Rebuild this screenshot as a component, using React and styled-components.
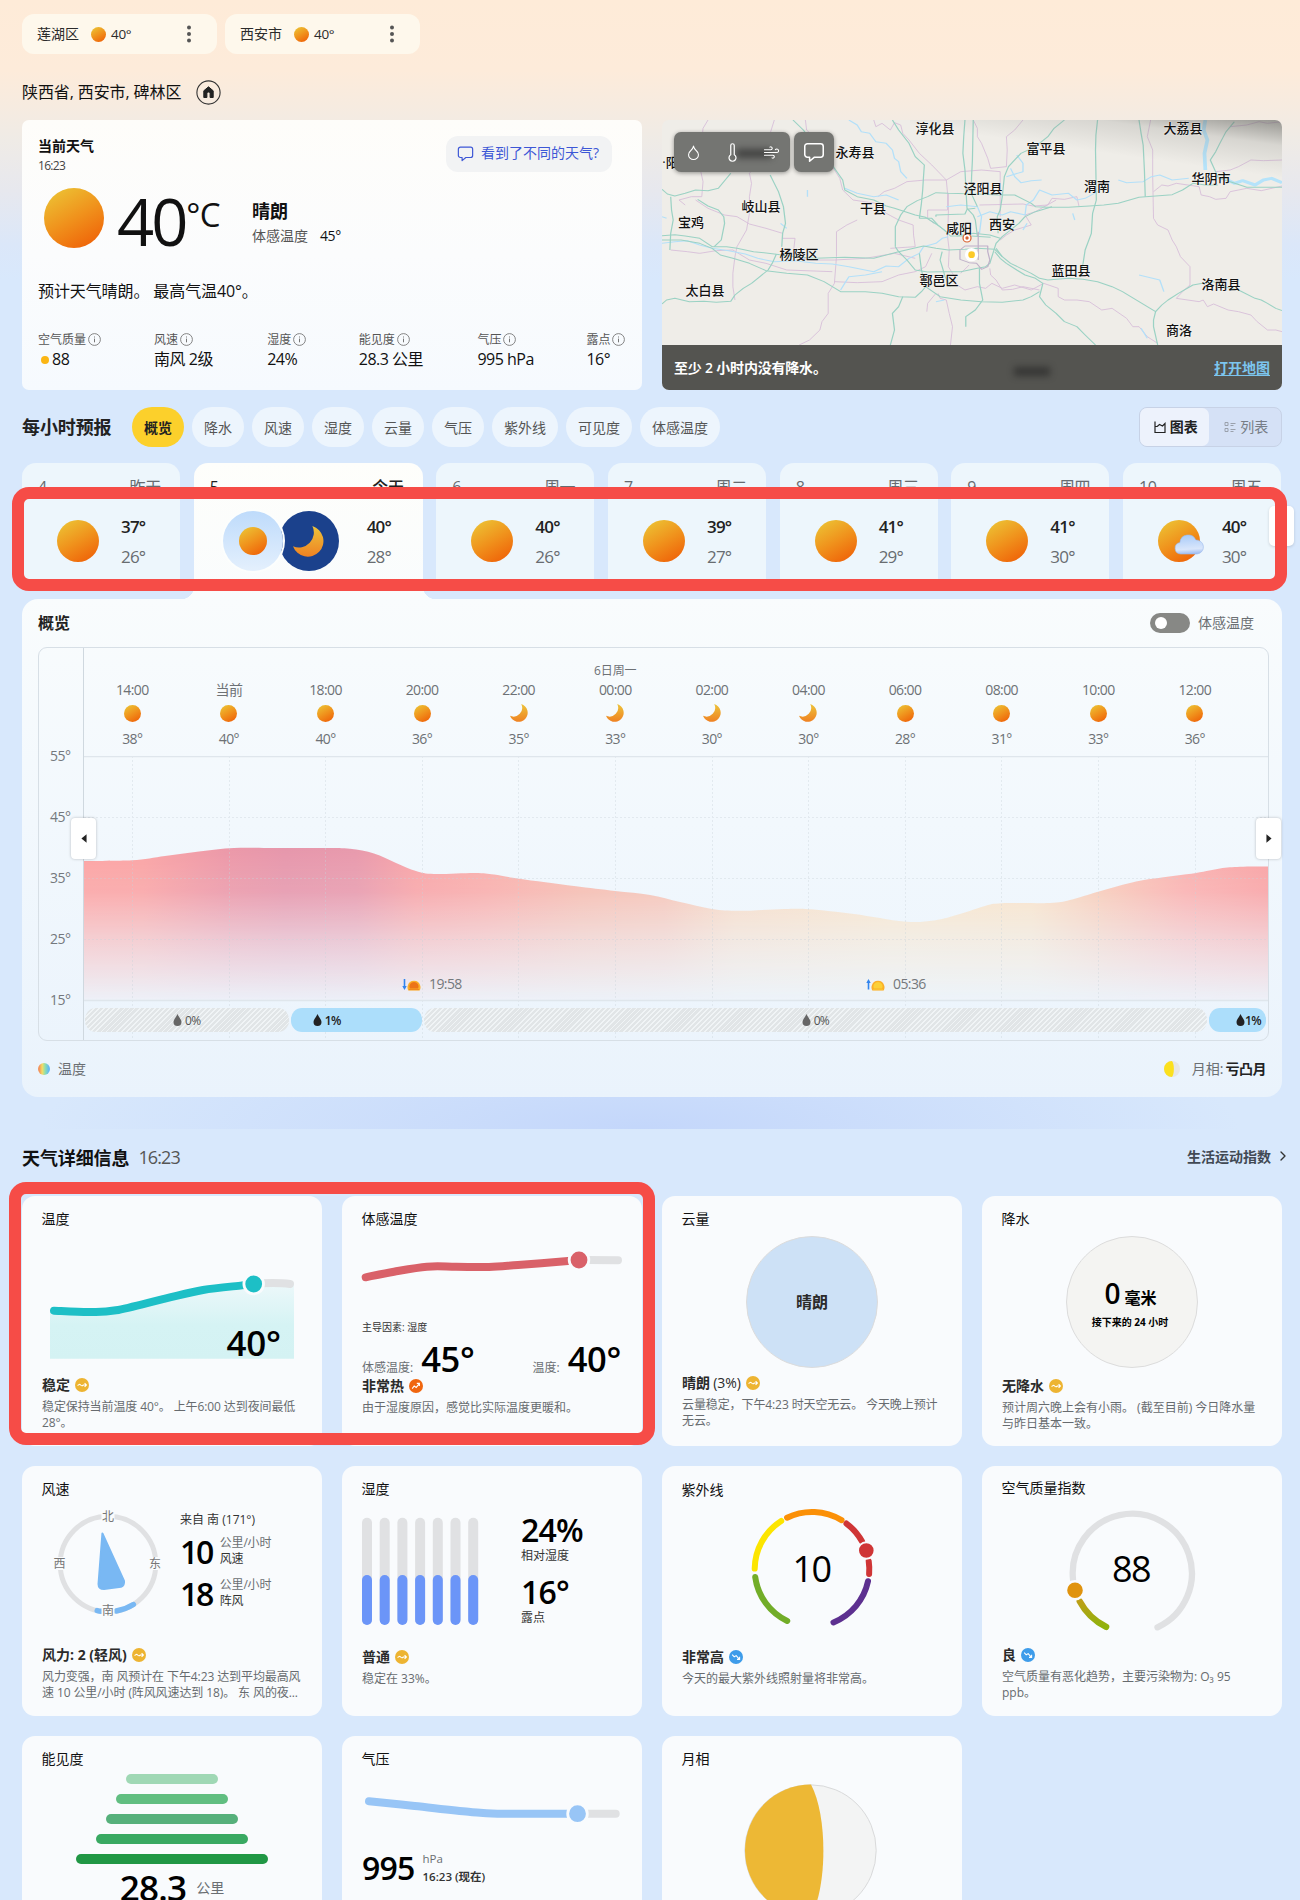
import React from "react"
import styled, { createGlobalStyle, css } from "styled-components"
import { Droplet, Thermometer, Wind, ChevronRight } from "lucide-react"

const Colors = {
    Text: '#111',
    Dark: '#2b2b2b',
    Muted: '#6b6f73',
    Blue: '#3d57d6',
    Red: '#f64c47',
    Gold: '#edb835',
    Track: '#e0e1e3',
    Card: '#f9fbfd',
}

const GlobalStyle = createGlobalStyle`
    * { box-sizing: border-box; }
    body {
        margin: 0;
        background: #d8e8fc;
        color: ${Colors.Text};
        font-family: "Open Sans", "Noto Sans CJK SC", sans-serif;
        overflow: hidden;
    }
    svg { display: block; flex: none; }
`

const Page = styled.main`
    width: 1300px;
    height: 1900px;
    overflow: hidden;
    padding: 14px 18px 0 22px;
    background:
        radial-gradient(ellipse 600px 120px at 640px 200px, rgba(182, 203, 250, .6), transparent) 0 929px / 1300px 200px no-repeat,
        linear-gradient(180deg, #feebd8 0, #fdebda 70px, #f5ebe1 112px, #efebe6 140px, #e7e8ee 190px, #dbe7f9 245px, #d8e8fc 280px);
    white-space: nowrap;
`

const Sun = styled.i`
    display: block;
    flex: none;
    width: ${p => p.$size}px;
    height: ${p => p.$size}px;
    border-radius: 50%;
    background: linear-gradient(150deg, #ecc435 5%, #f0921c 50%, #ef6409 90%);
`

const Moon = ({ size }) => <svg width={size} height={size} viewBox="0 0 32 32">
    <defs>
        <linearGradient id="moonFill" x1="0.5" y1="0" x2="0.5" y2="1">
            <stop offset="0" stopColor="#edc43a" />
            <stop offset="1" stopColor="#ef8122" />
        </linearGradient>
    </defs>
    <path d="M20 0A16.2 16.2 0 1 1 0 21A15.5 15.5 0 0 0 20 0Z" fill="url(#moonFill)" />
</svg>

const Cloud = styled.svg`
    position: absolute;
    left: 16px;
    top: 13px;
`

const Bubble = ({ size, color }) => <svg width={size} height={size} viewBox="0 0 20 20" fill="none" stroke={color} strokeWidth="1.4" strokeLinejoin="round">
    <path d="M4 2.5h12a2.4 2.4 0 0 1 2.4 2.4v7.4a2.4 2.4 0 0 1-2.4 2.4h-5.6L6 18.4v-3.7H4a2.4 2.4 0 0 1-2.4-2.4V4.9A2.4 2.4 0 0 1 4 2.5Z" />
</svg>

const Drop = ({ color }) => <svg width="9" height="12" viewBox="0 0 9 12">
    <path d="M4.5 0C5.5 3 8.5 5.2 8.5 8a4 4 0 0 1-8 0C.5 5.2 3.5 3 4.5 0Z" fill={color} />
</svg>

const InfoIcon = () => <svg width="13" height="13" viewBox="0 0 13 13" fill="none" stroke="#777">
    <circle cx="6.5" cy="6.5" r="5.9" strokeWidth=".9" />
    <path d="M6.5 5.6v3.7M6.5 3.5v1" strokeWidth="1" />
</svg>

/* ---------- saved places ---------- */

const Places = styled.div`
    display: flex;
    gap: 8px;
`

const Place = styled.div`
    width: 195px;
    height: 40px;
    padding: 0 20px 0 15px;
    border-radius: 12px;
    background: #fef8ec;
    display: flex;
    align-items: center;
    font-size: 14px;
    line-height: 20px;
    color: ${Colors.Dark};

    ${Sun} { margin: 0 5px 0 12px; }
`

const PlaceTemp = styled.span`
    flex: 1;
    font-size: 13.5px;
    letter-spacing: -.3px;
`

const Dots = () => <svg width="16" height="18" viewBox="0 0 16 18" fill="#555">
    <circle cx="8" cy="2.4" r="2" /><circle cx="8" cy="9" r="2" /><circle cx="8" cy="15.6" r="2" />
</svg>

const Location = styled.div`
    height: 66px;
    padding-top: 10px;
    display: flex;
    align-items: center;
    gap: 15px;
    font-size: 16px;
    line-height: 22px;
    letter-spacing: -.1px;

    span { margin-top: -1px; }
`

const HomeIcon = () => <svg width="25" height="25" viewBox="0 0 25 25">
    <circle cx="12.5" cy="12.5" r="11.6" fill="none" stroke="#333" strokeWidth="1.1" />
    <path d="M12.5 6.8 7.8 10.8V17.5h3.1v-3.9a1.6 1.6 0 0 1 3.2 0v3.9h3.1V10.8Z" fill="#222" stroke="#222" strokeLinejoin="round" />
</svg>

/* ---------- current weather ---------- */

const TopRow = styled.section`
    display: grid;
    grid-template-columns: 620px 620px;
    gap: 20px;
`

const Current = styled.div`
    height: 270px;
    padding: 15px 16px 0;
    border-radius: 7px;
    background: linear-gradient(180deg, #fefdfa, #fbfcfd 50%, #f6fafe);
`

const CurrentHead = styled.div`
    display: flex;
    justify-content: space-between;
    height: 53px;
    padding-right: 14px;
`

const CurrentTitle = styled.div`
    font-weight: 700;
    font-size: 14px;
    line-height: 22px;

    small {
        display: block;
        font-weight: 400;
        font-size: 12px;
        line-height: 17px;
        letter-spacing: -.7px;
        color: #444;
    }
`

const Feedback = styled.button`
    width: 166px;
    height: 36px;
    margin-top: 1px;
    padding: 0 2px 2px 0;
    border: 0;
    border-radius: 12px;
    background: #f2f3f4;
    color: ${Colors.Blue};
    display: flex;
    align-items: center;
    justify-content: center;
    gap: 7px;
    font: inherit;
    font-size: 14px;
    line-height: 20px;
`

const NowRow = styled.div`
    display: flex;
    height: 60px;
    padding-left: 6px;
`

const NowTemp = styled.div`
    width: 148px;
    padding-left: 13px;
    display: flex;
    font-size: 65px;
    line-height: 66px;
    letter-spacing: -3px;

    sup {
        margin-left: 1px;
        font-size: 33px;
        line-height: 53px;
        letter-spacing: -.7px;
    }
`

const NowText = styled.div`
    font-size: 18px;
    line-height: 26px;
    font-weight: 700;
    padding-top: 10px;

    p {
        margin: 0;
        display: flex;
        gap: 12px;
        font-size: 14px;
        line-height: 24px;
        font-weight: 400;
        color: #555;
    }
    b { font-weight: 400; color: #111; letter-spacing: -.4px; }
`

const Forecast = styled.p`
    margin: 31px 0 0;
    font-size: 16px;
    line-height: 24px;
    letter-spacing: -.1px;
`

const Stats = styled.div`
    margin-top: 27px;
    display: flex;
    justify-content: space-between;
    margin-right: -16px;
    padding-right: 15px;
`

const Stat = styled.div`
    font-size: 12px;
    line-height: 19px;
    color: #555;
    width: ${p => p.$width}px;

    span { display: flex; align-items: center; gap: 2px; }
    svg { margin-top: -1px; }
    strong {
        display: flex;
        align-items: center;
        font-weight: 400;
        font-size: 16px;
        line-height: 21px;
        letter-spacing: -.5px;
        color: ${Colors.Text};
    }
`

const AirDot = styled.i`
    width: 8px;
    height: 8px;
    margin: 0 3px;
    border-radius: 50%;
    background: #fbb614;
`

const stats = [
    { label: '空气质量', value: '88', dot: true, width: 66 },
    { label: '风速', value: '南风 2级', width: 63 },
    { label: '湿度', value: '24%', width: 41.5 },
    { label: '能见度', value: '28.3 公里', width: 68.5 },
    { label: '气压', value: '995 hPa', width: 59 },
    { label: '露点', value: '16°', width: 40.5 },
]

/* ---------- map ---------- */

const MapBox = styled.div`
    position: relative;
    height: 270px;
    border-radius: 7px;
    overflow: hidden;
    background: #efede8;
`

const Shade = styled.div`
    position: absolute;
    inset: 0;
    background: linear-gradient(188deg, rgba(90, 90, 85, .6) 0, rgba(130, 130, 125, .22) 8%, transparent 18%) right top / 60% 100% no-repeat;
`

const City = styled.span`
    position: absolute;
    left: ${p => p.$x}px;
    top: ${p => p.$y}px;
    transform: translate(-50%, -50%);
    font-size: 13px;
    line-height: 16px;
    font-weight: 500;
    text-shadow: 0 0 2px #fff;
`

const MapTools = styled.div`
    position: absolute;
    left: 12px;
    top: 12px;
    display: flex;
    gap: 4px;
`

const Smudge = styled.i`
    position: absolute;
    left: ${p => p.$x}px;
    top: ${p => p.$y}px;
    width: 36px;
    height: 9px;
    background: #222;
    opacity: .6;
    filter: blur(3.5px);
`

const ToolGroup = styled.div`
    position: relative;
    width: ${p => p.$w}px;
    height: 40px;
    border-radius: 7px;
    background: #747572;
    box-shadow: 0 1px 4px rgba(0, 0, 0, .4);
    color: #fff;
    display: flex;
    align-items: center;
    justify-content: center;
    gap: 20px;

    svg { position: relative; z-index: 1; }
`

const MapFooter = styled.div`
    position: absolute;
    inset: auto 0 0 0;
    height: 45px;
    padding: 0 12px;
    background: #545450;
    color: #fff;
    display: flex;
    align-items: center;
    justify-content: space-between;
    font-size: 14px;
    line-height: 20px;
    font-weight: 600;

    span { letter-spacing: -.2px; }
    a { color: #7cc5ee; text-decoration: underline; text-underline-offset: 2px; }
`

const cities = [
    ['淳化县', 273, 7.5], ['大荔县', 521, 8], ['富平县', 384, 28], ['永寿县', 193, 32], ['·阳', 8.5, 41.5],
    ['华阴市', 549, 58], ['渭南', 435, 66], ['泾阳县', 321, 67.5], ['岐山县', 99, 86], ['干县', 211, 88],
    ['宝鸡', 29, 102], ['咸阳', 297, 107.5], ['西安', 340, 104], ['杨陵区', 137, 133.5], ['鄠邑区', 277, 159.5],
    ['蓝田县', 409, 150], ['太白县', 43, 170], ['洛南县', 559, 164], ['商洛', 517, 210],
]

// the map tile uses its own drawing units, stretched onto the 620x270 box
const highways = [
    'M29 268 42 282 60 288 85 280 110 270 140 272 165 265 178 245 195 220M29 407 60 404 85 408 120 415 150 440 185 440 210 445 250 455 300 462 350 470 400 475 470 472 540 475 600 455 660 438 690 445 720 450 760 448 790 445 832 448',
    'M29 420 75 420 120 430 150 445 170 465 200 475 240 490 280 512 330 520 380 525 420 545 460 575 520 575 560 580 600 590 640 592 655 575 665 560',
    'M29 612 40 600 60 595 95 605 130 604 160 607 195 604 205 585 225 565 245 550 260 535 285 510 295 490 305 462',
    'M50 290 52 330 56 360 50 400 48 450M115 298 140 318 165 330 178 350 180 370 172 420 155 440M290 225 300 250 310 275 322 320 327 370 320 400 318 440',
    'M345 60 370 90 385 115 400 130 430 170 445 205 465 240 470 270 500 290 540 300 570 318 590 325 640 345 665 352 690 372 710 390 725 408 775 408 822 412',
    'M585 60 600 90 625 130 640 170 662 195 660 230 658 270 655 310 650 355M760 60 757 110 755 160 760 210 762 260 765 325 780 345 785 360 790 408',
    'M780 60 779 120 778 180 776 230 775 280 790 320M1000 60 975 85 960 110 930 140 895 160 865 200 855 230 850 290 845 330 838 350 840 400',
    'M1080 60 1076 105 1075 150 1076 220 1077 300 1068 340 1065 400 1050 450 1045 490 1038 530M1180 60 1185 100 1190 135 1193 210 1195 290M1410 65 1390 95 1375 130 1365 155 1352 180 1372 235 1400 245 1440 262 1525 262',
    'M592 440 592 410 592 380 605 345 620 320 645 302 670 290 690 278 720 280 790 282 840 285 880 285 920 310 930 320 960 322 1010 322 1060 318 1095 315 1130 310 1180 292 1220 288 1260 284 1285 270 1310 250 1340 255 1370 255',
    'M592 440 600 455 620 480 640 510 670 516 700 515 750 515 790 505 810 500 820 490 825 470 830 450 835 430 850 410 870 390 890 370 905 350 930 335 970 320',
    'M832 448 850 470 870 490 895 505 920 520 940 535 960 540 1010 535 1045 538 1080 545 1115 560 1140 575 1180 605 1220 635 1235 615 1250 600 1275 580 1310 555 1340 548 1360 545 1385 560 1420 570 1460 595 1475 600 1490 610 1510 625 1525 632',
    'M832 455 845 475 860 490 885 510 905 525 930 535 948 550 940 590 955 615 980 640 1000 665 1030 680 1050 705 1075 735M1220 635 1215 660 1215 680 1225 735M940 575 920 590 900 600 850 607 800 605 750 600 700 590 665 560 655 510 650 460',
    'M610 590 600 620 585 640 590 690 580 735M795 505 795 550 803 600 785 630 762 650 762 680M705 455 700 480 705 500 712 530 725 560',
    'M650 355 680 355 695 375 720 400M690 350 690 345 760 342 765 328 785 325M740 408 780 400 820 405 845 415M835 445 850 470',
]
const roads = [
    'M140 60 128 85 125 120 118 160 120 200 128 245 125 290 100 290 70 300 85 315M300 60 290 100 275 150 260 190 240 220 245 250 240 290 240 340 233 390 210 440 205 470 200 520 200 560 205 600',
    'M375 60 378 90 395 110 420 160 440 200 458 235 465 270 490 300 545 310 570 340 600 360 635 375 636 405 640 440 580 445',
    'M540 60 545 80 560 70 580 90 590 68 605 75 610 100 625 120 650 160 680 195 715 240 718 280 718 330 670 330 670 355 685 370M780 60 790 85 790 110 800 130 815 175 822 205 860 200 862 150 860 110 880 90 900 60',
    'M110 300 140 325 180 345 210 350 240 372 280 385 320 400 320 415 350 415 345 470 390 480 445 480 520 475 590 460 640 475',
    'M550 290 565 275 590 265 620 245 665 240 715 240 750 215 800 210 845 215 845 350M500 360 475 375 450 395 450 470 445 550 430 580 430 640 415 665 410 690 385 720 360 735',
    'M795 315 900 312 925 318 960 315 970 295 1000 298 1030 290 1035 318M1208 60 1200 110 1213 150 1213 230 1215 355 1225 375 1250 390 1260 420 1270 440 1280 470 1303 500 1303 555 1285 575 1270 595',
    'M1525 65 1490 70 1470 65 1440 75 1400 80M1525 180 1480 182 1450 180 1420 200 1400 210 1365 215M1215 275 1235 255 1250 258 1270 250 1325 260 1330 285 1350 290 1365 298 1390 295 1400 275 1440 265 1475 272 1525 258',
    'M720 280 720 340 718 410 722 450 720 500 735 530 735 550 760 570 790 560 810 565 825 550 850 565 880 555 920 570 950 550 985 565 985 590 1000 600 1030 600 1060 605 1090 630 1115 625 1150 655 1165 680 1180 680 1200 710 1225 730',
    'M1270 595 1325 605 1335 600 1345 620 1360 612 1395 630 1420 635 1450 645 1465 665 1490 690 1510 690 1525 695M445 545 500 548 560 545 600 525 640 515 665 500 680 460M695 580 700 595 715 600 722 640 730 680 725 735',
    'M820 505 822 525 835 540 850 570 875 568 900 560 940 570M845 420 860 405 880 390 920 375 905 345 930 335 980 300M50 450 90 455 120 460 160 452 200 450 240 480 280 490 330 510 440 515M770 495 750 520M668 635 670 610 690 580',
]
const rivers = [
    'M480 60 500 75 510 95 530 100 545 125 570 130 585 150 590 175 600 185 605 215 620 235M29 430 60 425 90 422 120 435 150 445 190 452 230 462 260 475 300 485 350 482 400 490 440 492 480 500 540 515 570 498 600 500 625 475 650 460 660 440 690 430 705 415 720 410',
    'M460 570 470 550 480 530 520 525 560 515M870 205 880 230 895 248 920 242 945 240M790 350 820 335 850 345 870 335 905 345 908 315 925 300 940 270 970 285 1010 280 1030 300 1050 295 1080 275 1100 255',
    'M1130 240 1150 248 1190 245 1210 230 1230 225 1260 240 1300 235M1180 525 1230 540 1240 575M470 265 500 280 540 290 570 285 600 300M715 320 750 315 790 320 800 350 795 400',
    'M690 605 710 600M1185 685 1200 715M380 270 380 290M315 370 330 385M29 350 40 355M860 230 900 215 900 190 885 165M910 370 900 390M1020 340 1025 360',
]

const MapTile = () => <svg width="620" height="270" viewBox="29 60 1496 810" preserveAspectRatio="none" fill="none" strokeLinejoin="round">
    <g stroke="#d6bdd8" strokeWidth="2.3">{roads.map(d => <path key={d} d={d} />)}</g>
    <g stroke="#b3e0f9" strokeWidth="3.2">{rivers.map(d => <path key={d} d={d} />)}</g>
    <path d="M1340 60 1336 90 1345 120 1338 160 1340 210M1390 238 1410 250 1430 242 1460 255 1480 240 1500 235 1525 248" stroke="#b5e3fa" strokeWidth="9" />
    <g stroke="#9bd2c4" strokeWidth="3">{highways.map(d => <path key={d} d={d} />)}</g>
    <path d="M748 450 760 438H815V455L820 480 815 500 800 508 788 490 770 488 748 478ZM792 395V480" stroke="#bfb0c9" strokeWidth="3" />
    <ellipse cx="765" cy="414" rx="9.6" ry="12" fill="#fff" stroke="#d9602f" strokeWidth="3" />
    <ellipse cx="765" cy="414" rx="4" ry="5" fill="#d9602f" />
    <ellipse cx="776" cy="464" rx="16" ry="20" fill="#fff" />
    <ellipse cx="776" cy="464" rx="8" ry="10" fill="#fcc92b" />
</svg>

/* ---------- hourly forecast ---------- */

const HourlyBar = styled.div`
    margin: 17px 0 16px;
    width: 1260px;
    height: 40px;
    display: flex;
    align-items: center;
`

const HourlyTitle = styled.h2`
    width: 110px;
    margin: -2px 0 0;
    font-size: 18px;
    font-weight: 700;
    letter-spacing: -.1px;
    color: #222;
`

const Pills = styled.div`
    display: flex;
    gap: 8px;
    flex: 1;
`

const Pill = styled.button`
    height: 40px;
    padding: 0 12px;
    border: 0;
    border-radius: 20px;
    background: ${p => p.$active ? '#fcd02b' : '#edf5fd'};
    color: ${p => p.$active ? '#222' : '#555'};
    font: inherit;
    font-size: 14px;
    font-weight: ${p => p.$active ? 700 : 400};
`

const Segmented = styled.div`
    width: 143px;
    height: 40px;
    border: 1px solid #c7d2e6;
    border-radius: 8px;
    background: #d5e1f6;
    display: flex;
`

const Segment = styled.div`
    width: ${p => p.$active ? 69 : 73}px;
    padding-left: 3px;
    border-radius: 7px;
    background: ${p => p.$active ? '#edf2fc' : 'transparent'};
    color: ${p => p.$active ? '#222' : '#777d86'};
    font-weight: ${p => p.$active ? 700 : 400};
    font-size: 14px;
    line-height: 20px;
    display: flex;
    align-items: center;
    justify-content: center;
    gap: 4px;
`

const filters = ['概览', '降水', '风速', '湿度', '云量', '气压', '紫外线', '可见度', '体感温度']

const Highlight = styled.div`
    position: absolute;
    left: ${p => p.$x}px;
    top: ${p => p.$y}px;
    width: ${p => p.$w}px;
    height: ${p => p.$h}px;
    border: 12px solid ${Colors.Red};
    border-radius: 17px;
    z-index: 3;
`

const Days = styled.div`
    position: relative;
    width: 1259px;
    height: 136px;
    display: grid;
    grid-template-columns: 158px 229px repeat(5, 158px);
    justify-content: space-between;
    align-items: start;
`

const Day = styled.div`
    position: relative;
    height: ${p => p.$today ? 136 : 122}px;
    padding: 14px 16px 0;
    border-radius: 14px 14px 0 0;
    background: ${p => p.$today ? 'linear-gradient(180deg, #fefefb, #f9fcfd)' : '#edf6fc'};
    color: ${p => p.$today ? '#222' : '#666b70'};

    ${p => p.$today && css`
        &:before, &:after {
            content: "";
            position: absolute;
            bottom: 0;
            width: 13px;
            height: 13px;
        }
        &:before {
            left: -13px;
            background: radial-gradient(circle at 0 0, transparent 13px, #f9fcfd 13.5px);
        }
        &:after {
            right: -13px;
            background: radial-gradient(circle at 100% 0, transparent 13px, #f9fcfd 13.5px);
        }
    `}
`

const DayHead = styled.div`
    display: flex;
    justify-content: space-between;
    padding-right: 3px;
    font-size: 16px;
    line-height: 20px;
    letter-spacing: -.3px;
    font-weight: ${p => p.$today ? 500 : 400};
`

const DayBody = styled.div`
    height: 60px;
    margin-top: 14px;
    padding-left: ${p => p.$today ? 13 : 19}px;
    display: flex;
    align-items: center;
`

const DayIcon = styled.div`
    position: relative;
    width: ${p => p.$today ? 144 : 64}px;
    display: flex;
`

const Badge = styled.div`
    width: 60px;
    height: 60px;
    border-radius: 50%;
    display: flex;
    align-items: center;
    justify-content: center;
    background: ${p => p.$night ? '#1b418c' : 'linear-gradient(180deg, #bedbfb, #e4f0fd)'};
    margin-left: ${p => p.$night ? -4 : 0}px;
    z-index: ${p => p.$night ? 0 : 1};
    box-shadow: ${p => p.$night ? 'none' : '0 0 0 2px #fcfefd'};
`

const DayTemps = styled.div`
    padding-top: 1px;
    font-size: 17px;
    line-height: 30px;
    color: #686c70;
    letter-spacing: -.8px;

    b { display: block; color: #222; font-weight: 600; }
`

const NextDays = styled.div`
    position: absolute;
    left: 1247px;
    top: 43px;
    width: 25px;
    height: 40px;
    border-radius: 5px;
    background: #fff;
    box-shadow: 0 1px 3px rgba(0, 0, 0, .15);
`

const days = [
    { date: '4', name: '昨天', high: 37, low: 26 },
    { date: '5', name: '今天', high: 40, low: 28, today: true },
    { date: '6', name: '周一', high: 40, low: 26 },
    { date: '7', name: '周二', high: 39, low: 27 },
    { date: '8', name: '周三', high: 41, low: 29 },
    { date: '9', name: '周四', high: 41, low: 30 },
    { date: '10', name: '周五', high: 40, low: 30, cloudy: true },
]

const CloudIcon = () => <Cloud width="30" height="22" viewBox="0 0 30 22">
    <defs>
        <linearGradient id="cloudFill" x1="0.4" y1="0" x2="0.5" y2="1">
            <stop offset="0" stopColor="#a9cbf9" />
            <stop offset=".75" stopColor="#d9e6fb" />
            <stop offset="1" stopColor="#9fbcf0" />
        </linearGradient>
    </defs>
    <path d="M6.5 21a5.8 5.8 0 0 1-.6-11.5A8.3 8.3 0 0 1 21.8 7a7 7 0 0 1 1.2 14Z" fill="url(#cloudFill)" stroke="#9ab9ec" strokeWidth=".6" />
</Cloud>

const DayCard = ({ day }) => <Day $today={day.today}>
    <DayHead $today={day.today}><span>{day.date}</span><span>{day.name}</span></DayHead>
    <DayBody $today={day.today}>
        <DayIcon $today={day.today}>
            {day.today
                ? <><Badge><Sun $size={28} /></Badge><Badge $night><Moon size={31} /></Badge></>
                : <Sun $size={42} />}
            {day.cloudy && <CloudIcon />}
        </DayIcon>
        <DayTemps><b>{day.high}°</b>{day.low}°</DayTemps>
    </DayBody>
</Day>

/* ---------- chart ---------- */

const Panel = styled.section`
    width: 1260px;
    height: 498px;
    padding: 11px 13px 0 16px;
    border-radius: 16px;
    background: linear-gradient(180deg, #f9fcfd, #f2f8fd 45%, #eaf3fc);
`

const PanelHead = styled.div`
    height: 37px;
    padding: 0 15px 12px 0;
    display: flex;
    align-items: center;
    font-size: 14px;
    line-height: 20px;
    color: ${Colors.Muted};

    h3 { margin: 0; flex: 1; font-size: 16px; font-weight: 700; color: #222; }
`

const Toggle = styled.i`
    width: 40px;
    height: 20px;
    margin-right: 8px;
    padding: 4px 5px;
    border-radius: 10px;
    background: #878885;

    &:after { content: ""; display: block; width: 12px; height: 12px; border-radius: 50%; background: #fff; }
`

const Chart = styled.div`
    position: relative;
    width: 1231px;
    height: 394px;
    border: 1px solid #d7dfe6;
    border-radius: 9px;
    display: grid;
    grid-template-columns: 44px 1185px;
`

const Axis = styled.div`
    height: 264px;
    margin-top: 98px;
    padding-left: 11px;
    display: flex;
    flex-direction: column;
    justify-content: space-between;
    font-size: 14px;
    line-height: 20px;
    letter-spacing: -.5px;
    color: #74787c;
`

const Plot = styled.div`
    border-left: 1px solid #cfd8df;
`

const Hours = styled.div`
    height: 108px;
    display: flex;
`

const Hour = styled.div`
    width: 96.6px;
    display: flex;
    flex-direction: column;
    align-items: center;
    font-size: 14px;
    line-height: 20px;
    letter-spacing: -.6px;
    color: #6d7175;

    small { height: 19px; margin-top: 13px; font-size: 12px; letter-spacing: -.1px; line-height: 20px; }
`

const HourIcon = styled.div`
    height: 29px;
    padding-bottom: 3px;
    display: flex;
    align-items: center;
`

const PrecipRow = styled.div`
    margin: -33px 2px 0 1px;
    display: flex;
    gap: 2px;
    position: relative;
`

const Precip = styled.div`
    width: ${p => p.$w}px;
    height: 24px;
    padding-left: ${p => p.$pad}px;
    border-radius: 11px;
    display: flex;
    align-items: center;
    gap: ${p => p.$tight ? 0 : 3}px;
    font-size: 12px;
    font-weight: ${p => p.$wet ? 600 : 400};
    letter-spacing: -.7px;
    color: ${p => p.$wet ? '#222' : '#555'};
    background: ${p => p.$wet ? '#acdefb' : 'repeating-linear-gradient(135deg, #e1e5e7 0 2.4px, #f0f4f6 2.4px 3.6px)'};
`

const SunEvent = styled.div`
    position: absolute;
    left: ${p => p.$x}px;
    top: 326px;
    display: flex;
    align-items: center;
    gap: 8px;
    font-size: 14px;
    line-height: 20px;
    letter-spacing: -.6px;
    color: #74787c;
`

const ChartArrow = styled.div`
    position: absolute;
    left: ${p => p.$x}px;
    top: 170px;
    width: 25px;
    height: 41px;
    border-radius: 4px;
    background: #fff;
    box-shadow: 0 0 3px rgba(0, 0, 0, .25);
    display: flex;
    align-items: center;
    justify-content: center;
`

const Legend = styled.div`
    height: 55px;
    padding-right: 3px;
    display: flex;
    align-items: center;
    font-size: 14px;
    line-height: 20px;
    color: ${Colors.Muted};

    span { flex: 1; margin-left: 8px; }
    b { color: #222; font-weight: 700; margin-left: 2px; letter-spacing: -.5px; }
    svg { margin-right: 12px; }
`

const Spectrum = styled.i`
    width: 12px;
    height: 12px;
    border-radius: 50%;
    background: linear-gradient(90deg, #f2915c 10%, #f5dd65 35%, #8ddfae 60%, #62b9f4 90%);
`

const hours = [
    ['14:00', 38], ['当前', 40], ['18:00', 40], ['20:00', 36], ['22:00', 35, true], ['00:00', 33, true],
    ['02:00', 30, true], ['04:00', 30, true], ['06:00', 28], ['08:00', 31], ['10:00', 33], ['12:00', 36],
]

const curve = [
    [0, 105], [48, 104.3], [81, 100], [115, 95.5], [150, 92], [190, 92], [241, 92], [266, 92.8], [290, 97.5], [312, 107], [332, 115],
    [350, 118], [391, 117], [410, 118.5], [435, 122.7], [490, 130], [531, 135], [566, 139], [596, 146], [628, 153], [655, 154.8],
    [700, 153], [725, 153.2], [770, 158], [820, 165.5], [850, 164.5], [876, 158], [901, 150], [918, 147.3], [966, 147], [986, 144],
    [1015, 135.5], [1046, 127], [1070, 122.6], [1112, 117], [1136, 112.5], [1156, 110.8], [1184, 110.5],
]

// catmull-rom through the points, written out as cubic beziers
const smooth = pts => pts.reduce((d, p, i) => {
    if (i === 0) return `M${p[0]} ${p[1]}`
    const a = pts[i - 2] || pts[i - 1]
    const b = pts[i - 1]
    const c = pts[i + 1] || p
    return `${d}C${b[0] + (p[0] - a[0]) / 6} ${b[1] + (p[1] - a[1]) / 6} ${p[0] - (c[0] - b[0]) / 6} ${p[1] - (c[1] - b[1]) / 6} ${p[0]} ${p[1]}`
}, '')

const heat = [
    [0, '#fca4a4'], [5, '#faa4a5'], [12, '#ec98a8'], [17, '#e696ab'], [23, '#e899ac'], [28, '#f8a4a7'], [34, '#f9adab'], [42, '#f6bdb1'], [49, '#f6c4b7'],
    [55, '#f7dac5'], [68, '#f8e4ca'], [80, '#f8e2c8'], [86, '#f8cbb9'], [93, '#fab1b0'], [100, '#f9a3a5'],
]

const TemperaturePlot = () => <svg width="1184" height="285" viewBox="0 0 1184 285">
    <defs>
        <linearGradient id="heat">
            {heat.map(([at, color]) => <stop key={at} offset={`${at}%`} stopColor={color} />)}
        </linearGradient>
        <linearGradient id="fade" gradientUnits="userSpaceOnUse" x1="0" y1="90" x2="0" y2="244">
            <stop offset="0" stopColor="#fff" />
            <stop offset=".3" stopColor="#fff" stopOpacity=".88" />
            <stop offset=".62" stopColor="#fff" stopOpacity=".46" />
            <stop offset="1" stopColor="#fff" stopOpacity=".05" />
        </linearGradient>
        <mask id="fadeMask"><rect width="1184" height="285" fill="url(#fade)" /></mask>
    </defs>
    <path d={`${smooth(curve)}V244H0Z`} fill="url(#heat)" mask="url(#fadeMask)" />
    <g stroke="#c9d3da" strokeDasharray="2 2" opacity=".38">
        <path d="M0 61.5H1184M0 122.5H1184M0 183.5H1184" />
        {hours.map((h, i) => <path key={h[0]} d={`M${Math.round(48 + i * 96.6) + .5} 0V284`} />)}
    </g>
    <path d="M0 .5H1184M0 244.5H1184" stroke="#dfe6ec" strokeWidth="1.4" />
</svg>

const SunIcon = ({ rise }) => <svg width="19" height="13" viewBox="0 0 19 13">
    <path d={rise ? 'M2.5 11.5V4' : 'M2.5 1v7.5'} fill="none" stroke="#3285ee" strokeWidth="1.6" />
    <path d={rise ? 'M.3 5h4.4L2.5 1Z' : 'M.3 8h4.400L2.5 12Z'} fill="#3285ee" />
    <path d="M6.300 12.500A6.300 6.300 0 0 1 5.800 7.500 6.400 6.400 0 0 1 18.200 7.500 6.300 6.300 0 0 1 17.700 12.500Z" fill="#fbaf28" />
    <path d="M8 10.500A4.500 4.500 0 1 1 16 10.500Z" fill={rise ? '#fcd036' : '#ec7318'} />
    <path d="M7 11.500h10" stroke={rise ? '#fbc02c' : '#f08a1e'} strokeWidth="1.200" />
</svg>

/* ---------- details ---------- */

const DetailsBar = styled.div`
    height: 99px;
    padding-top: 21px;
    margin-right: -7px;
    display: flex;
    align-items: center;

    h2 { margin: 0 9px 0 0; font-size: 18px; font-weight: 700; letter-spacing: -.1px; }
    time { flex: 1; font-size: 18px; color: #555; letter-spacing: -.9px; }
    a { font-size: 14px; font-weight: 600; color: #414954; margin: -2px 4px 0 0; }
    svg { margin: -2px -2px 0 0; }
`

const Details = styled.section`
    position: relative;
    width: 1260px;
    display: grid;
    grid-template-columns: repeat(4, 300px);
    grid-auto-rows: 250px;
    gap: 20px;
`

const Detail = styled.article`
    padding: 14px 20px 0;
    border-radius: 13px;
    background: ${Colors.Card};

    h4 {
        position: relative;
        top: ${p => (p.$nudge || 0) - 1}px;
        left: -.5px;
        margin: 0;
        font-size: 14px;
        line-height: 20px;
        font-weight: 400;
    }
`

const Graphic = styled.div`
    height: ${p => 145 + (p.$shift || 0)}px;
    margin: 0 -20px;
    padding-left: ${p => p.$inset ? 20 : 0}px;
    display: ${p => p.$row ? 'flex' : 'flow-root'};
`

const Summary = styled.div`
    display: flex;
    align-items: center;
    gap: 5px;
    height: 20px;
    margin-top: -1px;
    font-size: 14px;
    line-height: 20px;
    font-weight: 700;
    color: #2b2b2b;

    em { font-style: normal; font-weight: 400; }
    span { letter-spacing: -.1px; }
`

const Note = styled.p`
    margin: 4px 0 0;
    font-size: 12px;
    line-height: 16px;
    letter-spacing: ${p => p.$tight ? -.1 : 0}px;
    color: #676b6f;
`

const trendPaths = {
    flat: 'M2.6 7.6Q4.300 5.600 5.600 7T8.400 7H11M9.600 5.200 11.400 7 9.600 8.800',
    up: 'M3.2 9.6 5.2 7l2 1.4 3-3.6M7.8 4.4h2.6V7',
    down: 'M3.2 4.6 5.2 6.8l2-1.2 3 3.6M10.6 6.8v2.6H8',
}
const trendColors = { flat: '#edb432', up: '#f0660f', down: '#3e9cea' }

const Trend = ({ kind }) => <svg width="14" height="14" viewBox="0 0 14 14">
    <circle cx="7" cy="7" r="7" fill={trendColors[kind]} />
    <path d={trendPaths[kind]} fill="none" stroke="#fff" strokeWidth="1.1" />
</svg>

const Big = styled.span`
    font-size: ${p => p.$size || 32}px;
    line-height: 32px;
    font-weight: 600;
    color: #000;
    letter-spacing: ${p => p.$tight ? -2.4 : -.8}px;
`

const Small = styled.span`
    font-size: ${p => p.$size || 12}px;
    line-height: ${p => p.$line || 16}px;
    font-weight: ${p => p.$weight || 400};
    color: ${p => p.$dark ? '#333' : Colors.Muted};
    display: block;
`

const Readings = styled.div`
    padding: ${p => p.$top}px 0 0 ${p => p.$left || 0}px;
    display: flex;
    flex-direction: column;
`

const ValueRow = styled.div`
    height: 42px;
    display: flex;
    align-items: center;
    gap: 8px;

    ${Small} { letter-spacing: -.2px; }
    ${Big} { padding-top: 2px; }
`

const FeelRow = styled.div`
    height: 41px;
    padding-top: 7px;
    margin-right: 21px;
    display: flex;
    align-items: baseline;
    justify-content: space-between;

    div { display: flex; align-items: baseline; }
    ${Small} { margin-right: 8px; }
    ${Big} { line-height: 32px; letter-spacing: -.3px; }
`

const Disc = styled.div`
    width: 132px;
    height: 132px;
    margin: 6px auto 0;
    border-radius: 50%;
    border: 1px solid #dcdcdc;
    background: ${p => p.$fill};
    display: flex;
    flex-direction: column;
    align-items: center;
    justify-content: center;
    font-size: 16px;
    line-height: 22px;
    font-weight: 600;
    color: ${p => p.$ink};
`

const RainTotal = styled.div`
    display: flex;
    align-items: baseline;
    gap: 5px;
    margin: 4px 3px 0 0;
    font-weight: 700;
    line-height: 30px;

    ${Big} { font-size: 28px; font-weight: 600; line-height: 30px; }
`

const RainNote = styled.div`
    margin-right: 4px;
    font-size: 10px;
    line-height: 18px;
    font-weight: 700;
`

const VisibilityBar = styled.i`
    display: block;
    width: ${p => p.$w}px;
    height: 10px;
    margin: 0 auto 10px;
    border-radius: 5px;
    background: ${p => p.$color};
`

const visibility = [[92, '#a0d8b5'], [112, '#61be81'], [132, '#56b07b'], [152, '#39a962'], [192, '#219745']]

const Centered = styled.div`
    margin-top: -2px;
    display: flex;
    align-items: center;
    justify-content: center;
    gap: 10px;
    line-height: 36px;
`

const PressureRow = styled.div`
    display: flex;
    align-items: center;
    gap: 8px;
    height: 44px;
`

const TrendLine = ({ height, points, color, dot, end }) => <svg width="300" height={height} viewBox={`0 34 300 ${height}`} fill="none" strokeWidth="8" strokeLinecap="round">
    <path d={`M${dot[0] + 8} ${dot[1]}L${end[0]} ${end[1]}`} stroke={Colors.Track} />
    <path d={smooth([...points, dot])} stroke={color} />
    <circle cx={dot[0]} cy={dot[1]} r="9.8" fill={color} stroke={Colors.Card} strokeWidth="2.8" />
</svg>

const arc = (cx, cy, r, from, to) => {
    const at = deg => `${cx + r * Math.cos(deg * Math.PI / 180)} ${cy + r * Math.sin(deg * Math.PI / 180)}`
    return `M${at(from)}A${r} ${r} 0 ${to - from > 180 ? 1 : 0} 1 ${at(to)}`
}

const TempGraph = () => {
    const points = [[32, 114.7], [67, 116], [94, 114.3], [144, 102.3], [181, 94], [220, 89.4], [232, 88]]
    return <svg width="300" height="145" viewBox="0 34 300 145" fill="none" strokeLinecap="round">
        <defs>
            <linearGradient id="tealFill" x1="0" y1="0" x2="0" y2="1">
                <stop offset="0" stopColor="#ecf8fa" />
                <stop offset=".55" stopColor="#d5f3f4" />
                <stop offset="1" stopColor="#d4f2f3" />
            </linearGradient>
        </defs>
        <path d={`${smooth([[28, 114.7], ...points, [272, 88]])}V162.7H28Z`} fill="url(#tealFill)" />
        <path d="M240 87.2Q258 86.5 268 88" stroke={Colors.Track} strokeWidth="8" />
        <path d={smooth(points)} stroke="#1dbfc6" strokeWidth="8" />
        <circle cx="231.7" cy="88" r="9.8" fill="#1dbfc6" stroke={Colors.Card} strokeWidth="2.8" />
        <text x="204.5" y="159.5" fontSize="35" fontWeight="600" letterSpacing="-.3" fill="#000">40°</text>
    </svg>
}

const Compass = () => <svg width="139" height="145" viewBox="0 34 139 145" fill="none" strokeLinecap="round">
    <circle cx="86" cy="98" r="47.8" stroke={Colors.Track} strokeWidth="5" />
    <g stroke="#79b8f3" strokeWidth="5.5">
        <path d={arc(86, 98, 47.8, 58, 80)} />
        <path d={arc(86, 98, 47.8, 98, 103)} />
    </g>
    <g fill={Colors.Card}>
        <rect x="79.5" y="42" width="13" height="16" /><rect x="79.5" y="137" width="13" height="16" />
        <rect x="30" y="91" width="16" height="13" /><rect x="126" y="91" width="16" height="13" />
    </g>
    <path d="M80.4 67.5 102 115Q102.5 119.5 99 120.8L82 123Q76.5 123 76.5 118Z" fill="#79b8f3" stroke="#79b8f3" strokeWidth="2" strokeLinejoin="round" />
    <g fill="#777" fontSize="12" textAnchor="middle">
        <text x="86" y="55">北</text><text x="86" y="149">南</text>
        <text x="37.5" y="102">西</text><text x="133" y="102">东</text>
    </g>
</svg>

const HumidityBars = () => <svg width="159" height="145" viewBox="20 34 159 145">
    {[0, 1, 2, 3, 4, 5, 6].map(i => <g key={i}>
        <rect x={20 + i * 17.7} y="51.7" width="10" height="107" rx="5" fill={Colors.Track} />
        <rect x={20 + i * 17.7} y="109" width="10" height="50" rx="5" fill="#6b95f8" />
    </g>)}
</svg>

const uvArcs = [
    [115.6, 172.3, '#72ad28'], [180.7, 237.5, '#fce500'], [244.2, 301, '#fb9007'],
    [307, 331, '#cf3536'], [351.7, 364.6, '#cf3536'], [372, 428, '#5d3090'],
]

const UvGauge = () => <svg width="300" height="147" viewBox="0 34 300 147" fill="none" strokeLinecap="round" strokeWidth="6">
    {uvArcs.map(([from, to, color]) => <path key={from} d={arc(150, 103.3, 57.3, from, to)} stroke={color} />)}
    <circle cx="204.3" cy="84.5" r="8.3" fill="#cf3536" stroke={Colors.Card} strokeWidth="2" />
    <text x="149.5" y="116" fontSize="36" letterSpacing="-1.5" textAnchor="middle" fill="#000">10</text>
</svg>

const AqiGauge = () => <svg width="300" height="145" viewBox="0 34 300 145" fill="none" strokeLinecap="round" strokeWidth="6.3">
    <defs>
        <linearGradient id="aqi" x1="0" y1="0" x2="0" y2="1">
            <stop offset="0" stopColor="#bd9f17" />
            <stop offset="1" stopColor="#8fb20d" />
        </linearGradient>
    </defs>
    <path d={arc(150.3, 107.3, 59.6, 174, 425)} stroke={Colors.Track} />
    <path d={arc(150.3, 107.3, 59.6, 116, 152)} stroke="url(#aqi)" />
    <circle cx="93" cy="124.3" r="9" fill="#e0930e" stroke={Colors.Card} strokeWidth="2.4" />
    <text x="149" y="116" fontSize="36" letterSpacing="-1.5" textAnchor="middle" fill="#000">88</text>
</svg>

const MoonPhase = () => <svg width="300" height="147" viewBox="0 34 300 147">
    <circle cx="148.5" cy="114.5" r="65.7" fill="#f3f4f4" stroke="#d9dadb" />
    <path d="M149 48.5A66 66 0 1 0 149 180.5C165.5 150 165.5 79 149 48.5Z" fill={Colors.Gold} />
</svg>

const Bleed = styled.div`
    margin-left: -20px;
`

const RowGap = styled.div`
    height: 11px;
`

const BarStack = styled.div`
    padding-top: 4px;
`

const Visibility = () => <BarStack>
    {visibility.map(([w, color]) => <VisibilityBar key={w} $w={w} $color={color} />)}
    <Centered><Big $size={35}>28.3</Big><Small $size={14}>公里</Small></Centered>
</BarStack>

const DetailCard = ({ title, nudge, shift, row, inset, graphic, summary, trend, note, tight }) => <Detail $nudge={nudge}>
    <h4>{title}</h4>
    <Graphic $shift={shift} $row={row} $inset={inset}>{graphic}</Graphic>
    {summary && <Summary>{summary}<Trend kind={trend} /></Summary>}
    {note && <Note $tight={tight}>{note.map((line, i) => <React.Fragment key={line}>{i > 0 && <br />}{line}</React.Fragment>)}</Note>}
</Detail>

const App = () => <Page>
    <GlobalStyle />
    <Places>
        {['莲湖区', '西安市'].map(name => <Place key={name}>
            {name}<Sun $size={15} /><PlaceTemp>40°</PlaceTemp><Dots />
        </Place>)}
    </Places>
    <Location><span>陕西省, 西安市, 碑林区</span><HomeIcon /></Location>

    <TopRow>
        <Current>
            <CurrentHead>
                <CurrentTitle>当前天气<small>16:23</small></CurrentTitle>
                <Feedback><Bubble size={17} color={Colors.Blue} />看到了不同的天气?</Feedback>
            </CurrentHead>
            <NowRow>
                <Sun $size={60} />
                <NowTemp>40<sup>°C</sup></NowTemp>
                <NowText>晴朗<p>体感温度<b>45°</b></p></NowText>
            </NowRow>
            <Forecast>预计天气晴朗。 最高气温40°。</Forecast>
            <Stats>
                {stats.map(s => <Stat key={s.label} $width={s.width}>
                    <span>{s.label}<InfoIcon /></span>
                    <strong>{s.dot && <AirDot />}{s.value}</strong>
                </Stat>)}
            </Stats>
        </Current>

        <MapBox>
            <MapTile />
            <Shade />
            {cities.map(([name, x, y]) => <City key={name} $x={x} $y={y}>{name}</City>)}
            <MapTools>
                <ToolGroup $w={116}>
                    <Smudge $x={62} $y={17} />
                    <Droplet size={17} strokeWidth={1.5} />
                    <Thermometer size={21} strokeWidth={1.4} />
                    <Wind size={17} strokeWidth={1.5} />
                </ToolGroup>
                <ToolGroup $w={40}><Bubble size={22} color="#fff" /></ToolGroup>
            </MapTools>
            <MapFooter>
                <span>至少 2 小时内没有降水。</span><a>打开地图</a>
                <Smudge $x={352} $y={22} />
            </MapFooter>
        </MapBox>
    </TopRow>

    <HourlyBar>
        <HourlyTitle>每小时预报</HourlyTitle>
        <Pills>{filters.map((f, i) => <Pill key={f} $active={i === 0}>{f}</Pill>)}</Pills>
        <Segmented>
            <Segment $active>
                <svg width="12" height="13" viewBox="0 0 12 13" fill="none" stroke="#222" strokeWidth="1.2"><path d="M1 .5V11.5H11V2.5L8.5 5 5.5 3.5 3.2 5.5 1 5.5" /></svg>
                图表
            </Segment>
            <Segment>
                <svg width="12" height="12" viewBox="0 0 12 12" fill="none" stroke="#9aa1ac"><path d="M1 1.5h3V4.5H1ZM1 7.5h3v3H1ZM6.5 2.5h5M6.5 4.5h3M6.5 8.5h5M6.5 10.5h3" /></svg>
                列表
            </Segment>
        </Segmented>
    </HourlyBar>

    <Days>
        {days.map(d => <DayCard key={d.date} day={d} />)}
        <NextDays />
        <Highlight $x={-10} $y={24} $w={1275} $h={104} />
    </Days>

    <Panel>
        <PanelHead><h3>概览</h3><Toggle />体感温度</PanelHead>
        <Chart>
            <Axis>{[55, 45, 35, 25, 15].map(t => <span key={t}>{t}°</span>)}</Axis>
            <Plot>
                <Hours>
                    {hours.map(([time, temp, night]) => <Hour key={time}>
                        <small>{time === '00:00' && '6日周一'}</small>
                        {time}
                        <HourIcon>{night ? <Moon size={18} /> : <Sun $size={17} />}</HourIcon>
                        {temp}°
                    </Hour>)}
                </Hours>
                <TemperaturePlot />
                <PrecipRow>
                    <Precip $w={204} $pad={88}><Drop color="#666" />0%</Precip>
                    <Precip $w={131} $pad={22} $wet><Drop color="#222" />1%</Precip>
                    <Precip $w={784} $pad={378}><Drop color="#666" />0%</Precip>
                    <Precip $w={57} $pad={27} $wet $tight><Drop color="#222" />1%</Precip>
                </PrecipRow>
            </Plot>
            <SunEvent $x={363}><SunIcon />19:58</SunEvent>
            <SunEvent $x={827}><SunIcon rise />05:36</SunEvent>
            <ChartArrow $x={32}><svg width="6" height="9" viewBox="0 0 7 10"><path d="M6.5 0v10L.5 5Z" fill="#222" /></svg></ChartArrow>
            <ChartArrow $x={1217}><svg width="6" height="9" viewBox="0 0 7 10"><path d="M.5 0v10l6-5Z" fill="#222" /></svg></ChartArrow>
        </Chart>
        <Legend>
            <Spectrum /><span>温度</span>
            <svg width="16" height="16" viewBox="0 0 16 16"><circle cx="8" cy="8" r="8" fill="#e7e7e5" /><path d="M8 0a8 8 0 0 0 0 16C10.5 13 10.5 3 8 0Z" fill="#fbe01e" /></svg>
            月相:<b>亏凸月</b>
        </Legend>
    </Panel>

    <DetailsBar>
        <h2>天气详细信息</h2><time>16:23</time><a>生活运动指数</a><ChevronRight size={16} color="#333" />
    </DetailsBar>

    <Details>
        <DetailCard title="温度" graphic={<TempGraph />} shift={1} tight summary="稳定" trend="flat"
            note={['稳定保持当前温度 40°。 上午6:00 达到夜间最低', '28°。']} />
        <DetailCard title="体感温度" shift={2} inset summary="非常热" trend="up"
            note={['由于湿度原因，感觉比实际温度更暖和。']}
            graphic={<>
                <Bleed>
                    <TrendLine height={88} color="#d96169" dot={[237, 64]} end={[276, 64.3]}
                        points={[[23.7, 81.3], [52, 75.7], [85, 70.7], [114, 70.7], [147, 71], [176, 69], [226, 65]]} />
                </Bleed>
                <Small $size={10} $line={18} $dark>主导因素: 湿度</Small>
                <FeelRow>
                    <div><Small>体感温度:</Small><Big $size={34.5}>45°</Big></div>
                    <div><Small>温度:</Small><Big $size={34.5}>40°</Big></div>
                </FeelRow>
            </>} />
        <DetailCard title="云量" shift={-1} tight summary={<span>晴朗 <em>(3%)</em></span>} trend="flat"
            note={['云量稳定，下午4:23 时天空无云。 今天晚上预计', '无云。']}
            graphic={<Disc $fill="#cde1f6" $ink="#2b2b2b">晴朗</Disc>} />
        <DetailCard title="降水" shift={2} summary="无降水" trend="flat"
            note={['预计周六晚上会有小雨。 (截至目前) 今日降水量', '与昨日基本一致。']}
            graphic={<Disc $fill="#f4f4f2" $ink="#000">
                <RainTotal><Big>0</Big>毫米</RainTotal>
                <RainNote>接下来的 24 小时</RainNote>
            </Disc>} />

        <DetailCard title="风速" shift={1} row tight summary="风力: 2 (轻风)" trend="flat"
            note={['风力变强，南 风预计在 下午4:23 达到平均最高风', '速 10 公里/小时 (阵风风速达到 18)。 东 风的夜...']}
            graphic={<>
                <Compass />
                <Readings $top={9} $left={19}>
                    <Small $line={21} $dark>来自 南 (171°)</Small>
                    <ValueRow><Big $tight>10</Big><div><Small>公里/小时</Small><Small $dark>风速</Small></div></ValueRow>
                    <ValueRow><Big $tight>18</Big><div><Small>公里/小时</Small><Small $dark>阵风</Small></div></ValueRow>
                </Readings>
            </>} />
        <DetailCard title="湿度" shift={3} row inset summary="普通" trend="flat" note={['稳定在 33%。']}
            graphic={<>
                <HumidityBars />
                <Readings $top={14}>
                    <Big>24%</Big><Small $line={19} $dark>相对湿度</Small>
                    <RowGap />
                    <Big>16°</Big><Small $line={19} $dark>露点</Small>
                </Readings>
            </>} />
        <DetailCard title="紫外线" nudge={1} shift={3} graphic={<UvGauge />} summary="非常高" trend="down" note={['今天的最大紫外线照射量将非常高。']} />
        <DetailCard title="空气质量指数" nudge={-1} shift={1} graphic={<AqiGauge />} summary="良" trend="down"
            note={['空气质量有恶化趋势，主要污染物为: O₃ 95', 'ppb。']} />

        <DetailCard title="能见度" graphic={<Visibility />} />
        <DetailCard title="气压" inset graphic={<>
            <Bleed>
                <TrendLine height={76} color="#98c5f6" dot={[235.5, 77.7]} end={[273.7, 77.7]}
                    points={[[27, 65.3], [72.6, 70], [126.5, 75.7], [155.5, 77.7], [224, 77.7]]} />
            </Bleed>
            <PressureRow><Big>995</Big><div><Small $line={18} $size={11.5}>hPa</Small><Small $line={18} $size={11.5} $dark $weight={600}>16:23 (现在)</Small></div></PressureRow>
        </>} />
        <DetailCard title="月相" graphic={<MoonPhase />} />
        <Highlight $x={-13} $y={-14} $w={646} $h={263} />
    </Details>
</Page>

export default App
